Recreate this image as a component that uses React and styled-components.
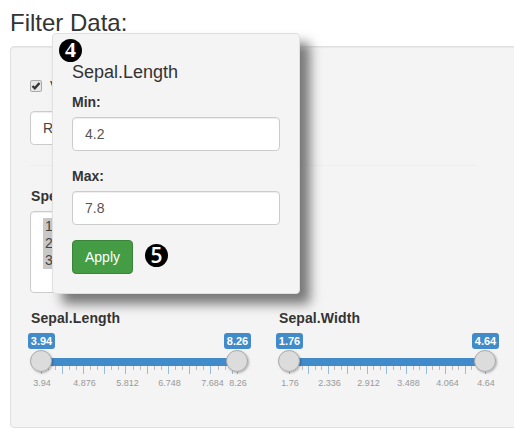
import React from "react";
import styled, { createGlobalStyle, css } from "styled-components";

const Global = createGlobalStyle`
  *, *::before, *::after { box-sizing: border-box; }
  html, body { margin: 0; height: 439px; overflow: hidden; background: #fff; }
  body { font: 14px/20px "Liberation Sans", Arial, sans-serif; color: #333; }
`;

const Page = styled.main`
  position: relative;
  width: 514px;
  height: 439px;
  overflow: hidden;
  padding: 9px 0 0 10px;
`;

const Title = styled.h3`
  margin: 0 0 10px;
  font-size: 24px;
  font-weight: 400;
  line-height: 27px;
`;

const well = css`
  background: #f4f4f4;
  border: 1px solid #e0e0e0;
  border-radius: 4px;
  box-shadow: inset 0 1px 1px rgba(0, 0, 0, 0.05);
  padding: 19px;
`;

const Panel = styled.section`
  ${well}
  width: 560px;
  height: 382px;
`;

const CheckRow = styled.label`
  display: flex;
  align-items: center;
  gap: 8px;
  height: 20px;
  margin-top: 10px;
`;

const CheckBox = styled.svg`
  display: block;
  width: 12px;
  height: 12px;
`;

const box = css`
  background: #fff;
  border: 1px solid #ccc;
  border-radius: 4px;
  box-shadow: inset 0 1px 1px rgba(0, 0, 0, 0.075);
`;

const Choice = styled.div`
  ${box}
  width: 220px;
  height: 34px;
  margin-top: 15px;
  padding: 6px 12px;
  color: #444;
`;

const Rule = styled.hr`
  width: 448px;
  margin: 20px 0;
  border: 0;
  border-top: 1px solid #eee;
`;

const Label = styled.div`
  height: 20px;
  font-weight: 700;
  letter-spacing: ${(p) => p.$spacing || "0"};
  padding-left: ${(p) => p.$indent || "0"};
`;

const ListBox = styled.div`
  ${box}
  width: 220px;
  height: 82px;
  margin-top: 5px;
  padding: 6px 12px;
`;

const Option = styled.div`
  height: 17px;
  padding-left: 2px;
  line-height: 17px;
  background: #c8c8c8;
  color: #444;
`;

const Sliders = styled.div`
  display: flex;
  gap: 31px;
  margin-top: 15px;
`;

const SliderBlock = styled.div`
  width: 217px;
  flex: none;
`;

const Values = styled.div`
  display: flex;
  justify-content: space-between;
  width: 223px;
  margin: 5px 0 0 -2px;
`;

const Value = styled.span`
  width: 27px;
  height: 16px;
  border-radius: 3px;
  background: #428bca;
  color: #fff;
  font-size: 11px;
  font-weight: 700;
  line-height: 17px;
  text-align: center;
`;

const Scale = styled.svg`
  display: block;
  overflow: visible;
  width: 217px;
  height: 46px;
  font: 9px "Liberation Sans", Arial, sans-serif;
  text-anchor: middle;
  fill: #999;
`;

const Popover = styled.section`
  ${well}
  position: absolute;
  left: 52px;
  top: 33px;
  width: 248px;
  height: 261px;
  padding-top: 28px;
  box-shadow: 10px 10px 12px #777;
`;

const PopTitle = styled.h4`
  margin: 0 0 10px;
  font-size: 18px;
  font-weight: 400;
  line-height: 20px;
`;

const Input = styled.input`
  ${box}
  display: block;
  width: 208px;
  height: 34px;
  margin: 5px 0 15px;
  padding: 6px 12px;
  font: inherit;
  color: #555;
`;

const Actions = styled.div`
  display: flex;
  align-items: flex-start;
  gap: 12px;
`;

const Apply = styled.button`
  width: 61px;
  height: 34px;
  padding: 0;
  border: 1px solid #398439;
  border-radius: 4px;
  background: #449d44;
  color: #fff;
  font: inherit;
`;

const Step = styled.span`
  width: 23px;
  height: 23px;
  border-radius: 50%;
  background: #000;
  color: #fff;
  font: ${(p) => (p.$serif ? '700 22px/22px "Liberation Serif", serif' : '600 21px/23px "Open Sans", sans-serif')};
  text-align: center;
  margin-top: 4px;
`;

const CornerStep = styled(Step)`
  position: absolute;
  left: 6px;
  top: 5px;
  margin: 0;
`;

function RangeSlider({ label, low, high, start, end, step, ticks, labels }) {
  return (
    <SliderBlock>
      <Label $spacing="0.1px" $indent="1px">{label}</Label>
      <Values>
        <Value>{low}</Value>
        <Value>{high}</Value>
      </Values>
      <Scale>
        <defs>
          <filter id="knob" x="-30%" y="-30%" width="170%" height="170%">
            <feDropShadow dx="1" dy="1" stdDeviation="1" floodOpacity="0.3" />
          </filter>
        </defs>
        {ticks.map((i) => {
          const major = i % 3 === 0;
          return (
            <rect key={i} x={Math.floor(start + i * step)} y="17" width="1"
              height={major ? 8 : 4} fill={major ? "#94bce0" : "#bbb"} />
          );
        })}
        <rect x={end} y="17" width="1" height="8" fill="#94bce0" />
        <rect x={start} y="9" width={end - start} height="8" fill="#428bca" />
        {labels.map(([x, text]) => <text key={text} x={x} y="37">{text}</text>)}
        {[start, end].map((x) => (
          <circle key={x} cx={x} cy="12" r="10.5" fill="#dcdcdc" stroke="#aaa" filter="url(#knob)" />
        ))}
      </Scale>
    </SliderBlock>
  );
}

const range = (n) => Array.from({ length: n }, (_, i) => i);

export default function App() {
  return (
    <>
      <Global />
      <Page>
        <Title>Filter Data:</Title>
        <Panel>
          <CheckRow>
            <CheckBox viewBox="0 0 12 12">
              <rect x=".5" y=".5" width="11" height="11" rx="1.5" fill="#e6e6e6" stroke="#aaa" />
              <path d="M2.5 6 4.8 8.3 9.5 3" fill="none" stroke="#333" strokeWidth="2.4" />
            </CheckBox>
            V
          </CheckRow>
          <Choice>R</Choice>
          <Rule />
          <Label $spacing="0.1px" $indent="1px">Spe</Label>
          <ListBox>
            <Option>1</Option>
            <Option>2</Option>
            <Option>3</Option>
          </ListBox>
          <Sliders>
            <RangeSlider label="Sepal.Length" low="3.94" high="8.26" start={11} end={207}
              step={7.08} ticks={range(28)}
              labels={[[12, "3.94"], [54.5, "4.876"], [97.5, "5.812"], [139.5, "6.748"], [182.5, "7.684"], [208, "8.26"]]} />
            <RangeSlider label="Sepal.Width" low="1.76" high="4.64" start={11} end={207}
              step={6.53} ticks={range(30)}
              labels={[[12, "1.76"], [51.5, "2.336"], [90.5, "2.912"], [130.5, "3.488"], [169.5, "4.064"], [208, "4.64"]]} />
          </Sliders>
        </Panel>
        <Popover>
          <CornerStep $serif>4</CornerStep>
          <PopTitle>Sepal.Length</PopTitle>
          <Label>Min:</Label>
          <Input defaultValue="4.2" />
          <Label>Max:</Label>
          <Input defaultValue="7.8" />
          <Actions>
            <Apply>Apply</Apply>
            <Step>5</Step>
          </Actions>
        </Popover>
      </Page>
    </>
  );
}
